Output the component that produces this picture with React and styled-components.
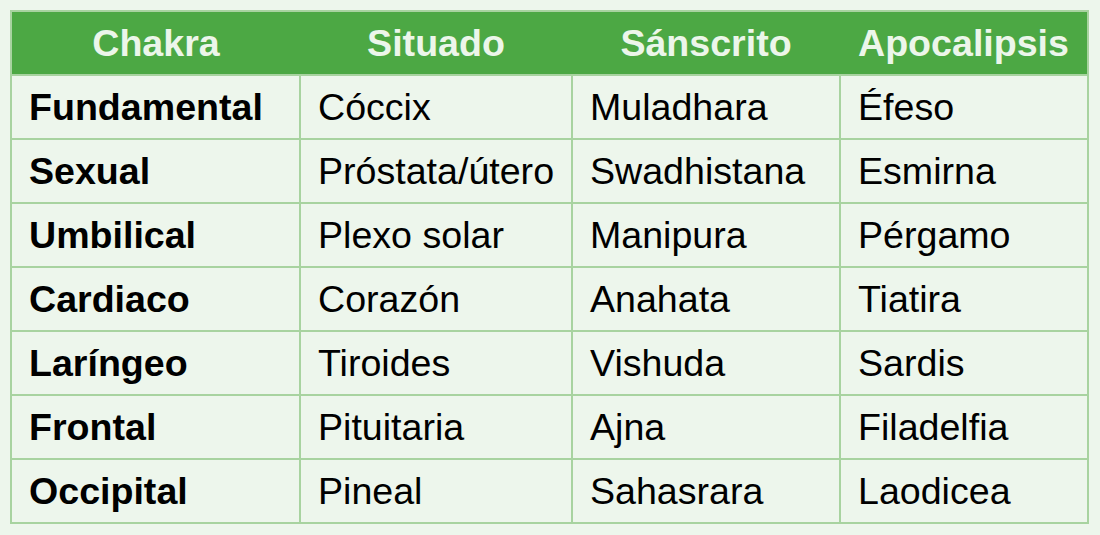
import React from 'react'
import styled, { createGlobalStyle } from 'styled-components'

const GlobalStyle = createGlobalStyle`
  html, body {
    margin: 0;
    padding: 0;
    background: #edf6ec;
    font-family: "Liberation Sans", Arial, sans-serif;
  }
`

const Page = styled.div`
  padding: 10px 13px 10px 10px;
`

const Table = styled.table`
  border-collapse: collapse;
  table-layout: fixed;
  width: 1075px;
  border: 2px solid #a8d3a0;
  font-size: 37.6px;
`

const HeadRow = styled.tr`
  background: #4ca844;
  height: 64px;
`

const HeadCell = styled.th`
  color: #ecf6ea;
  font-weight: bold;
  text-align: center;
  padding: 0;
  width: ${p => p.w}px;
`

const Row = styled.tr`
  height: 64px;
`

const Cell = styled.td`
  border: 2px solid #a8d3a0;
  padding: 0 0 0 17px;
  color: #000;
  font-weight: ${p => (p.bold ? 'bold' : 'normal')};
  white-space: nowrap;
  vertical-align: middle;
`

const columns = [
  { label: 'Chakra', w: 288 },
  { label: 'Situado', w: 272 },
  { label: 'Sánscrito', w: 268 },
  { label: 'Apocalipsis', w: 247 },
]

const rows = [
  ['Fundamental', 'Cóccix', 'Muladhara', 'Éfeso'],
  ['Sexual', 'Próstata/útero', 'Swadhistana', 'Esmirna'],
  ['Umbilical', 'Plexo solar', 'Manipura', 'Pérgamo'],
  ['Cardiaco', 'Corazón', 'Anahata', 'Tiatira'],
  ['Laríngeo', 'Tiroides', 'Vishuda', 'Sardis'],
  ['Frontal', 'Pituitaria', 'Ajna', 'Filadelfia'],
  ['Occipital', 'Pineal', 'Sahasrara', 'Laodicea'],
]

export default function App() {
  return (
    <>
      <GlobalStyle />
      <Page>
        <Table>
          <thead>
            <HeadRow>
              {columns.map(c => (
                <HeadCell key={c.label} w={c.w}>{c.label}</HeadCell>
              ))}
            </HeadRow>
          </thead>
          <tbody>
            {rows.map(r => (
              <Row key={r[0]}>
                {r.map((v, i) => (
                  <Cell key={i} bold={i === 0}>{v}</Cell>
                ))}
              </Row>
            ))}
          </tbody>
        </Table>
      </Page>
    </>
  )
}
